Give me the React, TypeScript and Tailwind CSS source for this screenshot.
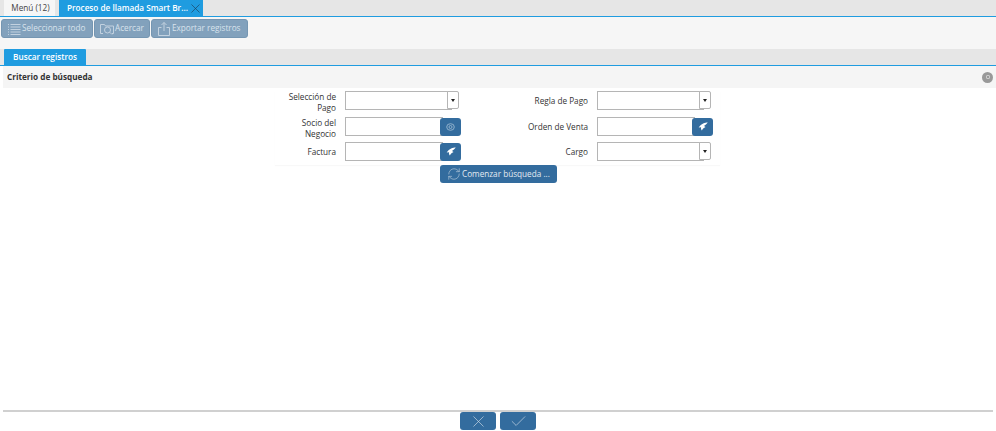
import { Check, RefreshCw, X } from "lucide-react";

const font = { fontFamily: '"Open Sans", sans-serif' };

function ListIcon() {
  return (
    <svg width="14" height="14" viewBox="0 0 14 14" fill="none" stroke="#c3d2e0" strokeWidth="1">
      <path d="M1 2.500h1M1 5h1M1 7.500h1M1 10h1M1 12.500h1M3.500 2.500h10M3.500 5h10M3.500 7.500h10M3.500 10h10M3.500 12.500h10" />
    </svg>
  );
}

function ZoomIcon() {
  return (
    <svg width="14" height="14" viewBox="0 0 14 14" fill="none" stroke="#c3d2e0" strokeWidth="1">
      <path d="M3 11.500H.5v-9h4l1 1.500h8v7.500H12" />
      <circle cx="7.500" cy="8" r="3" />
      <path d="M9.700 10.200l2.300 2.300" />
    </svg>
  );
}

function ExportIcon() {
  return (
    <svg width="14" height="15" viewBox="0 0 14 15" fill="none" stroke="#c3d2e0" strokeWidth="1">
      <path d="M4.500 6.500h-3v8h11v-8h-3" />
      <path d="M7 10V1.500M4.500 4L7 1.500 9.500 4" />
    </svg>
  );
}

function Wing() {
  return (
    <svg width="10" height="9" viewBox="0 0 9 8" fill="#ffffff">
      <path d="M8.800 .5C6.300 .5 3 1.500 .6 5l2.200-.3c-.3 1 0 2.200.7 3 .5-1.300 1.600-2.500 3.300-3.200L5.400 3.600C6.500 3 7.800 1.900 8.800 .5z" />
    </svg>
  );
}

function Eye() {
  return (
    <svg width="9" height="8" viewBox="0 0 9 8" fill="none" stroke="#8fb0cc" strokeWidth="1">
      <ellipse cx="4.500" cy="4" rx="3.800" ry="3.300" />
      <circle cx="4.500" cy="4" r="1.500" />
    </svg>
  );
}

function ToolButton({ icon, label, width }: { icon: React.ReactNode; label: string; width: string }) {
  return (
    <div className={`flex h-[19px] items-center gap-[1px] rounded-[3px] border border-[#7596b2] bg-[#82a1bc] pl-[5px] text-[8.2px] text-[#d9e3ec] ${width}`}>
      <span className="shrink-0">{icon}</span>
      <span className="whitespace-nowrap">{label}</span>
    </div>
  );
}

function SelectField() {
  return (
    <div className="flex h-[19px] w-[114px]">
      <div className="h-[19px] w-[107px] shrink-0 border border-[#b5b5b5] bg-white" />
      <div className="ml-[-5px] flex h-[18px] w-[12px] shrink-0 items-center justify-center rounded-r-[2px] border border-[#b5b5b5] bg-white">
        <div className="h-0 w-0 border-x-[2.500px] border-t-[3px] border-x-transparent border-t-[#222222]" />
      </div>
    </div>
  );
}

function LookupField({ icon }: { icon: React.ReactNode }) {
  return (
    <div className="flex h-[19px] w-[116px] items-center">
      <div className="h-[19px] w-[98px] shrink-0 border border-[#b5b5b5] bg-white" />
      <div className="ml-[-3px] flex h-[18px] w-[21px] shrink-0 items-center justify-center rounded-[3px] bg-[#336c9e]">{icon}</div>
    </div>
  );
}

function Label({ children, width }: { children: React.ReactNode; width: string }) {
  return <div className={`whitespace-nowrap text-right text-[8.2px] leading-[11px] text-[#333333] ${width}`}>{children}</div>;
}

function BottomButton({ children }: { children: React.ReactNode }) {
  return <div className="flex h-[18px] w-[36px] items-center justify-center rounded-[3px] bg-[#336c9e]">{children}</div>;
}

export default function App() {
  return (
    <div className="flex h-[431px] w-[996px] flex-col bg-white" style={font}>
      <div className="flex h-[17px] items-end border-b border-[#1f9ce0] bg-[#e6e6e6] pl-[4px]">
        <div className="flex h-[16px] w-[51px] items-center justify-center bg-[#f6f6f6] pl-[2px] text-[8.2px] text-[#444444]">Menú (12)</div>
        <div className="ml-[4px] flex h-[16px] w-[144px] items-center bg-[#1f9ce0] pl-[8px] text-[8.2px] font-semibold text-white">
          <span className="w-[125px] whitespace-nowrap">Proceso de llamada Smart Br...</span>
          <X size={15} strokeWidth={1} className="mt-[1px] shrink-0 text-[#1d3c55]" />
        </div>
      </div>

      <div className="flex h-[32px] items-start gap-[1px] bg-[#f6f6f6] pl-[1px] pt-[2px]">
        <ToolButton icon={<ListIcon />} label="Seleccionar todo" width="w-[92px]" />
        <ToolButton icon={<ZoomIcon />} label="Acercar" width="w-[56px]" />
        <ToolButton icon={<ExportIcon />} label="Exportar registros" width="w-[97px]" />
      </div>

      <div className="flex h-[17px] items-end border-b border-[#1f9ce0] bg-[#e6e6e6] pl-[4px]">
        <div className="flex h-[16px] w-[82px] items-center justify-center rounded-t-[1px] bg-[#1f9ce0] text-[8.2px] font-semibold text-white">Buscar registros</div>
      </div>

      <div className="ml-[3px] flex h-[22px] items-center justify-between bg-[#f5f5f5] pl-[4px] pr-[3px]">
        <span className="pt-[1px] text-[8.2px] font-bold text-[#333333]">Criterio de búsqueda</span>
        <div className="flex h-[11px] w-[11px] items-center justify-center rounded-full bg-[#999999]">
          <div className="h-[4px] w-[4px] rounded-[1px] border border-[#cccccc]" />
        </div>
      </div>

      <div className="flex flex-1 flex-col">
        <div className="flex flex-col items-start pl-[275px] pt-[3px]">
          <div className="w-[445px] pb-[1px] shadow-[0_1px_1px_#f8f8f8]">
            <div className="flex h-[26px] items-start">
              <Label width="w-[61px]">Selección de<br />Pago</Label>
              <div className="ml-[9px]"><SelectField /></div>
              <div className="ml-[69px] self-center pb-[7px]"><Label width="w-[60px]">Regla de Pago</Label></div>
              <div className="ml-[9px]"><SelectField /></div>
            </div>
            <div className="flex h-[25px] items-start">
              <Label width="w-[61px]">Socio del<br />Negocio</Label>
              <div className="ml-[9px]"><LookupField icon={<Eye />} /></div>
              <div className="ml-[67px] self-center pb-[6px]"><Label width="w-[60px]">Orden de Venta</Label></div>
              <div className="ml-[9px]"><LookupField icon={<Wing />} /></div>
            </div>
            <div className="flex h-[22px] items-start">
              <div className="self-center pb-[3px]"><Label width="w-[61px]">Factura</Label></div>
              <div className="ml-[9px]"><LookupField icon={<Wing />} /></div>
              <div className="ml-[67px] self-center pb-[3px]"><Label width="w-[60px]">Cargo</Label></div>
              <div className="ml-[9px]"><SelectField /></div>
            </div>
          </div>
        </div>
        <div className="ml-[440px] flex h-[18px] w-[117px] items-center rounded-[3px] bg-[#336c9e] pl-[7px] text-[8.2px] text-[#e3ebf2]">
          <RefreshCw size={14} strokeWidth={1} className="mr-[1px] shrink-0 text-[#c3d2e0]" />
          <span className="whitespace-nowrap">Comenzar búsqueda ...</span>
        </div>
      </div>

      <div className="mx-[3px] flex h-[21px] justify-center gap-[4px] border-t-2 border-[#d0d0d0] bg-white">
        <BottomButton><X size={19} strokeWidth={0.8} className="text-[#d5e0ea]" /></BottomButton>
        <BottomButton><Check size={19} strokeWidth={0.8} className="text-[#d5e0ea]" /></BottomButton>
      </div>
    </div>
  );
}
